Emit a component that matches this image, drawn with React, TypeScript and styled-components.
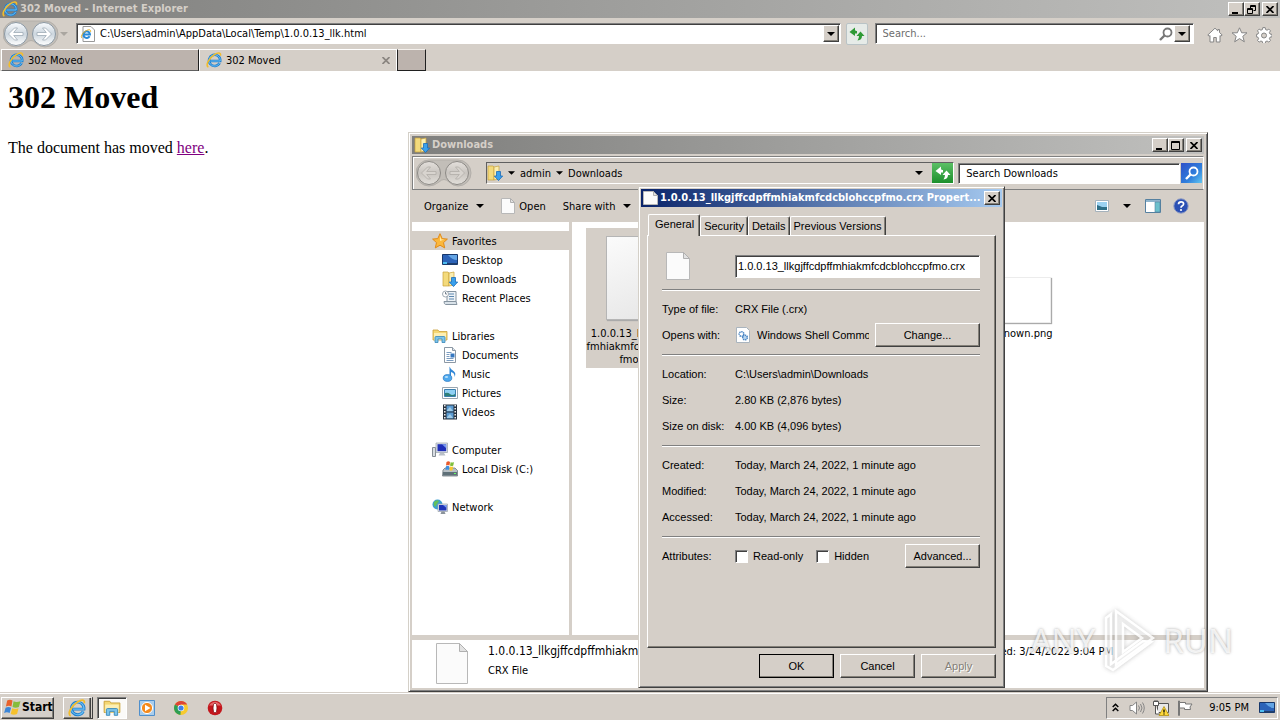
import React from 'react';
import styled, { createGlobalStyle, css } from 'styled-components';

const face = '#d5cfc8';
const ui = '"DejaVu Sans Condensed", "DejaVu Sans", "Noto Sans", sans-serif';
const sans = '"Liberation Sans", Arial, sans-serif';

const Global = createGlobalStyle`
  * { box-sizing: border-box; }
  body { margin: 0; background: #fff; font-family: ${ui}; font-size: 11px; line-height: 13px; color: #000; }
  button, input { font: inherit; color: inherit; margin: 0; }
  h1, h2, p, ul { margin: 0; padding: 0; }
  ul { list-style: none; }
  svg { display: block; flex: none; }
`;

const raised = css`
  background: ${face};
  border: 1px solid;
  border-color: #fff #404040 #404040 #fff;
  box-shadow: inset -1px -1px 0 #848078;
`;

const sunken = css`
  border: 1px solid;
  border-color: #808080 #fff #fff #808080;
  box-shadow: inset 1px 1px 0 #404040;
`;

const Desktop = styled.div`
  position: relative;
  display: flex;
  flex-direction: column;
  min-height: 100vh;
  overflow: hidden;
`;

/* Title bars */
const TitleBar = styled.header<{ $tone?: 'active' | 'idle' }>`
  display: flex;
  align-items: center;
  gap: 2px;
  height: 18px;
  padding: 0 2px;
  color: ${(p) => (p.$tone === 'active' ? '#fff' : face)};
  background: ${(p) =>
    p.$tone === 'active'
      ? 'linear-gradient(90deg, #0a246a, #a6caf0)'
      : 'linear-gradient(90deg, #7f7f7d, #c0c0be)'};
`;
const Title = styled.h2`
  flex: 1;
  min-width: 0;
  font-size: 11px;
  line-height: 18px;
  font-weight: bold;
  white-space: nowrap;
`;
const Captions = styled.div`
  display: flex;
  & > :last-child { margin-left: 2px; }
`;
const CaptionButton = styled.button`
  ${raised}
  display: flex;
  align-items: center;
  justify-content: center;
  width: 16px;
  height: 14px;
  padding: 0;
`;

/* Browser */
const Browser = styled.main`
  flex: 1;
  display: flex;
  flex-direction: column;
`;
const BrowserBar = styled.div`
  display: flex;
  align-items: center;
  height: 31px;
  padding: 0 8px 0 3px;
  background: ${face};
`;
const AddressBox = styled.div`
  ${sunken}
  flex: 760 1 0;
  display: flex;
  align-items: center;
  height: 21px;
  margin: 0 5px 0 7px;
  padding: 1px 1px 1px 3px;
  background: #fff;
`;
const SearchBox = styled(AddressBox)`
  flex-grow: 312;
  margin: 0 13px 0 7px;
  padding-right: 3px;
  & svg { margin-right: 1px; }
`;
const PlainInput = styled.input`
  flex: 1;
  min-width: 0;
  padding: 0 4px;
  border: 0;
  outline: 0;
  background: transparent;
  &::placeholder { color: #6d6d6d; opacity: 1; }
`;
const DropButton = styled.button`
  ${raised}
  display: flex;
  align-items: center;
  justify-content: center;
  width: 16px;
  height: 17px;
  padding: 0;
`;
const IconButton = styled.button`
  display: flex;
  align-items: center;
  justify-content: center;
  padding: 0;
  border: 0;
  background: none;
`;
const RefreshButton = styled(IconButton)`
  width: 22px;
  height: 22px;
  border: 1px solid #b9c3c6;
  border-radius: 2px;
  background: #e6ebe8;
`;
const BrowserTools = styled.div`
  display: flex;
  gap: 8px;
  padding-top: 3px;
`;
const TabStrip = styled.div`
  display: flex;
  height: 22px;
  padding-left: 1px;
  background: ${face};
`;
const BrowserTab = styled.button<{ $current?: boolean }>`
  display: flex;
  align-items: center;
  gap: 4px;
  width: 198px;
  padding: 0 6px;
  text-align: left;
  border: 1px solid;
  border-color: #fff #202020 ${(p) => (p.$current ? face : '#606060')} #fff;
  background: ${(p) => (p.$current ? face : '#bcb3ad')};
  ${(p) => p.$current && 'border-right-color: #fff;'}
  & > span { flex: 1; }
`;
const NewTab = styled.button`
  width: 29px;
  border: 1px solid #202020;
  border-top-color: #f4f0ec;
  background: #bcb3ad;
`;
const Page = styled.article`
  flex: 1;
  padding: 8px;
  font-family: "Liberation Serif", "Times New Roman", serif;
  font-size: 16px;
  line-height: 18px;
  background: #fff;
  & h1 { font-size: 32px; line-height: 37px; margin-bottom: 23px; }
  & a { color: #800080; }
`;

/* Explorer window */
const Window = styled.section`
  position: absolute;
  display: flex;
  flex-direction: column;
  background: ${face};
  border: 1px solid;
  border-color: #d4d0c8 #404040 #404040 #d4d0c8;
  box-shadow: inset 1px 1px 0 #fff, inset -1px -1px 0 #808080;
`;
const ExplorerWindow = styled(Window)`
  left: 408px;
  top: 132px;
  width: 800px;
  height: 560px;
  padding: 3px;
`;
const NavBar = styled.div`
  display: flex;
  align-items: center;
  height: 34px;
  margin-top: 2px;
  padding: 0 1px 0 3px;
  border: 1px solid #808080;
  border-right-color: #fff;
  box-shadow: inset 1px 1px 0 #fff;
`;
const Crumbs = styled.nav`
  flex: 467 1 0;
  display: flex;
  align-items: center;
  gap: 5px;
  height: 22px;
  margin: 0 4px 0 14px;
  border: 1px solid;
  border-color: #606060 #fff #fff #606060;
`;
const Spacer = styled.span`
  flex: 1;
`;
const GreenButton = styled(IconButton)`
  width: 21px;
  height: 20px;
  margin-left: 4px;
  background: linear-gradient(#5cc065, #1c8f2c);
`;
const FolderSearch = styled.div`
  ${sunken}
  flex: 217 1 0;
  display: flex;
  align-items: center;
  height: 21px;
  padding-left: 3px;
  background: #fff;
`;
const BlueButton = styled(IconButton)`
  width: 21px;
  height: 20px;
  margin-left: 1px;
  background: linear-gradient(135deg, #2f50c8, #2f7fdc 60%, #62c6f0);
`;
const CommandBar = styled.div`
  display: flex;
  align-items: center;
  height: 32px;
  padding: 0 15px 0 12px;
`;
const Command = styled.button<{ $gap?: number; $tight?: boolean }>`
  display: flex;
  align-items: center;
  gap: ${(p) => (p.$tight ? 4 : 8)}px;
  margin-right: ${(p) => p.$gap ?? 17}px;
  padding: 0;
  border: 0;
  background: none;
`;
const Panes = styled.div`
  flex: 1;
  display: flex;
  min-height: 0;
  background: #fff;
`;
const Sidebar = styled.nav`
  display: flex;
  flex-direction: column;
  gap: 19px;
  width: 160px;
  padding-top: 9px;
  border-right: 3px solid ${face};
`;
const Place = styled.a<{ $root?: boolean; $current?: boolean }>`
  display: flex;
  align-items: center;
  gap: 4px;
  height: 19px;
  padding-top: 1px;
  padding-left: ${(p) => (p.$root ? 20 : 30)}px;
  color: #000;
  text-decoration: none;
  background: ${(p) => (p.$current ? face : 'transparent')};
`;
const Files = styled.div`
  flex: 1;
  display: flex;
  justify-content: space-between;
  align-items: flex-start;
  padding: 6px 153px 0 14px;
`;
const FileItem = styled.div<{ $selected?: boolean }>`
  display: flex;
  flex-direction: column;
  align-items: center;
  gap: 1px;
  width: ${(p) => (p.$selected ? 104 : 64)}px;
  height: 140px;
  padding-top: 8px;
  text-align: center;
  background: ${(p) => (p.$selected ? face : 'transparent')};
`;
const Thumb = styled.div`
  display: flex;
  align-items: flex-end;
  height: 90px;
`;
const Sheet = styled.div<{ $tall?: boolean }>`
  width: 64px;
  height: ${(p) => (p.$tall ? 84 : 46)}px;
  margin-bottom: ${(p) => (p.$tall ? 6 : 3)}px;
  border: 1px solid ${(p) => (p.$tall ? '#b5b5b5' : '#ececec')};
  background: ${(p) => (p.$tall ? 'linear-gradient(160deg, #fbfbfb, #e6e6e6)' : '#fff')};
  box-shadow: 1px 1px 1px #aaa;
`;
const Details = styled.footer`
  display: flex;
  justify-content: space-between;
  height: 53px;
  padding: 3px 91px 0 24px;
  border-top: 5px solid ${face};
  background: #fff;
`;
const DetailMain = styled.div`
  display: flex;
  gap: 20px;
`;
const DetailText = styled.div`
  padding-top: 2px;
  & p { margin-bottom: 6px; }
`;
const DetailName = styled.p`
  font-size: 12px;
`;

/* Properties dialog */
const Dialog = styled(Window)`
  left: 638px;
  top: 186px;
  width: 367px;
  height: 502px;
  padding: 2px;
  font-family: ${sans};
`;
const DialogTitle = styled(TitleBar)`
  font-family: ${ui};
`;
const DialogTabs = styled.div`
  display: flex;
  align-items: flex-end;
  height: 28px;
  padding: 0 7px;
`;
const DialogTab = styled.button<{ $current?: boolean }>`
  position: relative;
  z-index: ${(p) => (p.$current ? 1 : 0)};
  height: ${(p) => (p.$current ? 22 : 19)}px;
  margin-bottom: ${(p) => (p.$current ? -1 : 0)}px;
  padding: ${(p) => (p.$current ? '0 5px 2px 6px' : '1px 3px 0 3px')};
  border: 1px solid;
  border-color: #fff #404040 transparent #fff;
  border-bottom: 0;
  border-radius: 2px 2px 0 0;
  background: ${face};
  box-shadow: inset -1px 0 0 #848078;
`;
const TabPanel = styled.div`
  ${raised}
  flex: 1;
  margin: 0 6px;
  padding: 15px 15px 0 14px;
`;
const NameRow = styled.div`
  display: grid;
  grid-template-columns: 73px 1fr;
  align-items: center;
  height: 38px;
  padding-bottom: 8px;
  & svg { margin-left: 4px; }
  & input {
    ${sunken}
    height: 23px;
    padding: 0 2px;
    outline: 0;
    background: #fff;
  }
`;
const Section = styled.div`
  padding: 6px 0;
  border-top: 1px solid #808080;
  box-shadow: inset 0 1px 0 #fff;
`;
const Field = styled.div`
  display: grid;
  grid-template-columns: 73px 1fr;
  align-items: center;
  height: 26px;
`;
const Value = styled.div`
  display: flex;
  align-items: center;
  min-width: 0;
  white-space: nowrap;
`;
const Clip = styled.span`
  flex: 1;
  margin: 0 6px;
  overflow: hidden;
`;
const Button = styled.button<{ $width?: number; $primary?: boolean }>`
  ${raised}
  flex: none;
  width: ${(p) => p.$width ?? 75}px;
  height: 24px;
  padding: 0;
  outline: ${(p) => (p.$primary ? '1px solid #000' : '0')};
  outline-offset: -1px;
  &:disabled { color: #848078; text-shadow: 1px 1px 0 #fff; }
`;
const Check = styled.label`
  display: flex;
  align-items: center;
  gap: 5px;
  margin-right: 13px;
  & input {
    ${sunken}
    appearance: none;
    width: 13px;
    height: 13px;
    background: #fff;
  }
`;
const DialogActions = styled.div`
  display: flex;
  justify-content: flex-end;
  gap: 6px;
  padding: 6px 6px 7px;
`;

/* Taskbar */
const Taskbar = styled.footer`
  display: flex;
  align-items: center;
  height: 27px;
  padding: 1px 2px 0 1px;
  border-top: 1px solid #fff;
  background: ${face};
  box-shadow: 0 -1px 0 #d5cfc8;
`;
const StartButton = styled.button`
  ${raised}
  display: flex;
  align-items: center;
  gap: 1px;
  width: 53px;
  height: 22px;
  margin-right: 9px;
  padding: 0 0 0 2px;
  font-size: 12px;
  font-weight: bold;
`;
const TaskButton = styled.button<{ $state?: 'open' | 'pressed' }>`
  display: flex;
  align-items: center;
  justify-content: center;
  width: ${(p) => (p.$state ? 30 : 34)}px;
  height: 22px;
  padding: 0;
  border: 0;
  background: none;
  ${(p) => p.$state === 'open' && raised}
  ${(p) => p.$state === 'open' && 'border-right: 3px double #404040; margin-right: 4px;'}
  ${(p) => p.$state === 'pressed' && sunken}
  ${(p) => p.$state === 'pressed' && 'background: #fbfaf8; margin-right: 3px;'}
`;
const Tray = styled.div`
  display: flex;
  align-items: center;
  gap: 8px;
  height: 22px;
  padding: 0 2px 0 5px;
  border: 1px solid;
  border-color: #808080 #fff #fff #808080;
  & > :first-child { margin-right: 2px; }
  & time { margin: 0 2px 0 8px; }
`;

/* Translucent brand mark floating over the desktop */
const Watermark = styled.div`
  position: absolute;
  right: 47px;
  bottom: 46px;
  display: flex;
  align-items: center;
  gap: 4px;
  font-family: "Noto Sans", "Open Sans", sans-serif;
  font-size: 33px;
  line-height: 66px;
  color: rgba(255, 255, 255, 0.8);
  text-shadow: 0 0 3px rgba(110, 110, 110, 0.6);
  pointer-events: none;
`;
const WatermarkShape = styled.svg`
  filter: drop-shadow(0 0 2px rgba(120, 120, 120, 0.5));
`;

/* Icons */
const IEIcon = ({ size = 16 }: { size?: number }) => (
  <svg width={size} height={size} viewBox="0 0 16 16" fill="none">
    <path d="M13.6 11A5.6 5.6 0 1 1 14.2 9H4.4" stroke="#1f7fd0" strokeWidth="2.6" />
    <path d="M13.6 11A5.6 5.6 0 1 1 14.2 9H4.4" stroke="#6cc0f2" strokeWidth="1" />
    <path d="M2.4 15C-.8 13.8 2.4 6.4 8.4 2.6c3.800-2.400 6.800-2.200 6 1.200" stroke="#f2bd2c" strokeWidth="1.600" />
  </svg>
);
const PageIEIcon = () => (
  <svg width="16" height="16" viewBox="0 0 16 16">
    <path d="M3 .5h8l3.5 3.5v11.5H3z" fill="#fff" stroke="#999" />
    <path d="M9.6 10.2A3.3 3.3 0 1 1 10 8.5H4" fill="none" stroke="#2a8ad8" strokeWidth="2" />
    <path d="M2 12C0 11 3 6 6.5 4.5S11 4 10.5 6" fill="none" stroke="#e8b020" />
  </svg>
);
const Arrows = ({ faded }: { faded?: boolean }) => (
  <svg width="56" height="28" viewBox="0 0 56 28">
    <defs>
      <linearGradient id={faded ? 'gf' : 'gb'} x1="0" y1="0" x2="0" y2="1">
        <stop offset="0" stopColor={faded ? '#e4e0dc' : '#fafcff'} />
        <stop offset=".5" stopColor={faded ? '#c9c5c0' : '#ccd6de'} />
        <stop offset="1" stopColor={faded ? '#e2dfda' : '#fff'} />
      </linearGradient>
    </defs>
    <path d="M13 1h29a13 13 0 0 1 0 26q-5 0-9-4-5-5-10 0-5 4-10 4a13 13 0 0 1 0-26z" fill="#c2beb8" stroke="#b3afaa" />
    {[13, 41].map((x) => (
      <circle key={x} cx={x} cy="14" r="11.5" fill={`url(#${faded ? 'gf' : 'gb'})`} stroke={faded ? '#8c8985' : '#8b98a3'} />
    ))}
    <g fill={faded ? '#d8d4cf' : '#fff'} stroke={faded ? '#b1ada8' : '#9eabb6'} strokeWidth=".8">
      <path d="M5.5 14l6-6h3l-3.8 4.5H20v3h-9.3l3.8 4.5h-3z" />
      <path d="M48.5 14l-6-6h-3l3.8 4.5H34v3h9.3L39.5 20h3z" />
    </g>
  </svg>
);
const Caret = ({ color = '#000', size = 7 }: { color?: string; size?: number }) => (
  <svg width={size} height="4" viewBox="0 0 8 4"><path d="M0 0h8L4 4z" fill={color} /></svg>
);
const Minimise = () => <svg width="10" height="9" viewBox="0 0 10 9"><path d="M1 7h6v2H1z" /></svg>;
const Maximise = () => <svg width="10" height="9" viewBox="0 0 10 9"><path d="M.5.5h8v8h-8zM.5 1.500h8" fill="none" stroke="#000" /></svg>;
const Restore = () => (
  <svg width="10" height="9" viewBox="0 0 10 9" fill="none" stroke="#000">
    <path d="M3.5 3V.5h5v5H6.500M3.500 1.500h5M.5 3.500h5v5h-5zM.5 4.500h5" />
  </svg>
);
const Close = ({ color = '#000' }: { color?: string }) => (
  <svg width="8" height="7" viewBox="0 0 8 7"><path d="M.5 0l7 7M7.5 0l-7 7" stroke={color} strokeWidth="1.7" /></svg>
);
const RefreshIcon = ({ color = '#2e9a35' }: { color?: string }) => (
  <svg width="16" height="14" viewBox="0 0 16 14" fill={color}>
    <path d="M6 .5L.5 5 6 9V6.500H8V4Q6.500 4.300 6 3z" />
    <path d="M11.500 4.500L7.500 9H10Q10 11.500 8.500 13.500 13 13 13 9h2.500z" />
  </svg>
);
const Magnifier = ({ color = '#777' }: { color?: string }) => (
  <svg width="14" height="14" viewBox="0 0 14 14" fill="none" stroke={color}>
    <circle cx="8.5" cy="5.5" r="4" strokeWidth="1.8" />
    <path d="M5.5 8.5L1 13" strokeWidth="2.4" />
  </svg>
);
const HomeIcon = () => (
  <svg width="16" height="16" viewBox="0 0 16 16" fill="#fff" stroke="#858585">
    <path d="M8 1.200L.8 8l1.400 1.200.8-.7v6.500h3.700v-4.500h2.600V15H13V8.500l.8.7L15.200 8l-2.700-2.500V2.500h-1.700v1.400z" />
  </svg>
);
const StarOutline = () => (
  <svg width="17" height="16" viewBox="0 0 17 16" fill="#fff" stroke="#858585">
    <path d="M8.500.8l2.200 5h5.300l-4.200 3.500 1.500 5.500-4.800-3.200-4.800 3.200 1.500-5.500L1 5.800h5.300z" />
  </svg>
);
const GearIcon = () => (
  <svg width="16" height="16" viewBox="0 0 16 16" fill="#fff" stroke="#858585">
    <path d="M6.800.6h2.400l.4 2 1.500.6 1.700-1.100 1.700 1.700-1.100 1.700.6 1.500 2 .4v2.400l-2 .4-.6 1.500 1.100 1.700-1.700 1.700-1.700-1.100-1.500.6-.4 2H6.800l-.4-2-1.500-.6-1.700 1.100-1.700-1.700 1.100-1.700L2 10.200l-1.600-.4V7.400L2 7l.6-1.500-1.100-1.700 1.700-1.700 1.700 1.100 1.500-.6z" />
    <circle cx="8" cy="8.500" r="2.500" fill={face} />
  </svg>
);
const DownloadFolder = () => (
  <svg width="16" height="16" viewBox="0 0 16 16">
    <path d="M1 1h5l1 1v13H1z" fill="#f3da7c" stroke="#c9a23a" strokeWidth=".7" />
    <path d="M7 2l5-1v13l-5 1z" fill="#fbeeb0" stroke="#c9a23a" strokeWidth=".7" />
    <path d="M9.500 6.500h4V11h2.200l-4.200 4.600L7.300 11h2.200z" fill="#3aa0ec" stroke="#1c6cb8" strokeWidth=".8" />
  </svg>
);
const FavStar = () => (
  <svg width="16" height="16" viewBox="0 0 16 16">
    <path d="M8 .7l2.200 4.900 5.200.5-3.900 3.500 1.200 5.300L8 12.200l-4.700 2.700 1.200-5.300L.6 6.100l5.200-.5z" fill="#fbb83c" stroke="#e08a1a" />
    <path d="M8 3l1.300 3.500h3L8 8z" fill="#ffe9a8" />
  </svg>
);
const DesktopIcon = () => (
  <svg width="16" height="16" viewBox="0 0 16 16">
    <path d="M.5 2.500h15v10H.5z" fill="#2c63b8" stroke="#17376b" />
    <path d="M6 3h9v5Q10 8 6 3z" fill="#63a4e4" />
    <path d="M1 11h14v1.500H1z" fill="#20406e" /><path d="M1 10h4v2H1z" fill="#4cbcf0" />
  </svg>
);
const RecentIcon = () => (
  <svg width="16" height="16" viewBox="0 0 16 16">
    <path d="M5 1.500h9v11H5z" fill="#eef3f7" stroke="#8694a0" />
    <path d="M7 4h5M7 6.500h5M7 9h5" stroke="#5c87b0" /><path d="M2 11.500h12l1 3H3.500Q2 14 2 11.500z" fill="#d9e2e9" stroke="#8694a0" />
    <circle cx="3.500" cy="4" r="3" fill="#fff" stroke="#8694a0" strokeWidth=".8" /><path d="M3.500 2v2h1.500" stroke="#456" fill="none" strokeWidth=".7" />
  </svg>
);
const LibraryIcon = ({ size = 16 }: { size?: number }) => (
  <svg width={size} height={size} viewBox="0 0 16 16">
    <path d="M1 2h5l1 1.500h8V12H1z" fill="#f4d774" stroke="#c99f37" strokeWidth=".8" />
    <path d="M2 5h12v7H2z" fill="#fcefb4" />
    <path d="M3 14.500V9.500q0-1 1-1h8q1 0 1 1v5h-3V11H6v3.500z" fill="#7cc4ea" stroke="#3787b8" strokeWidth=".8" />
  </svg>
);
const DocIcon = () => (
  <svg width="16" height="16" viewBox="0 0 16 16">
    <path d="M2.500.5h8l3 3v12h-11z" fill="#fff" stroke="#8c98a4" />
    <path d="M10.500.5v3h3" fill="#dbe4ec" stroke="#8c98a4" />
    <path d="M4.500 5.500h5M4.500 7.500h3M4.500 9.500h3M4.500 11.500h7M4.500 13.500h7" stroke="#7b9cc0" /><path d="M8.500 6.500h4v4h-4z" fill="#3577c0" />
  </svg>
);
const MusicIcon = () => (
  <svg width="16" height="16" viewBox="0 0 16 16">
    <path d="M7.500 12V.5q1 3 4 4.500 3 2 1 6 .5-4-3.500-5v6z" fill="#2f86d6" />
    <ellipse cx="5.500" cy="12" rx="4.300" ry="3.400" fill="#4fa9ee" stroke="#2272bd" strokeWidth=".7" />
    <ellipse cx="4.500" cy="11" rx="1.700" ry="1" fill="#b7e0fb" />
  </svg>
);
const PictureIcon = () => (
  <svg width="16" height="16" viewBox="0 0 16 16">
    <path d="M.5 2.500h15v11H.5z" fill="#fff" stroke="#9aa6b0" />
    <path d="M2.500 4.500h11v7h-11z" fill="#8fd0f4" stroke="#3b7fae" />
    <path d="M3 8q3-1 5 1t5 0v2H3z" fill="#2d7f78" />
  </svg>
);
const VideoIcon = () => (
  <svg width="16" height="16" viewBox="0 0 16 16">
    <path d="M1 .5h14v15H1z" fill="#26303c" />
    <path d="M4.500 1.500h7v6h-7zM4.500 8.500h7v6h-7z" fill="#5b9bd2" />
    <path d="M5 6l3-3 3 4H5zM5 13l3-3 3 4H5z" fill="#9fcbe8" />
    <path d="M2.800 1v15M13.200 1v15" stroke="#fff" strokeWidth="1.400" strokeDasharray="1.500 1.500" />
  </svg>
);
const ComputerIcon = () => (
  <svg width="16" height="16" viewBox="0 0 16 16">
    <path d="M.5 5.500h3v9h-3z" fill="#d8dde2" stroke="#858c94" />
    <path d="M4 1h11.500v9.500H4z" fill="#dfe4ea" stroke="#98a0aa" strokeWidth=".7" /><path d="M5.500 2.200h8.700v7H5.500z" fill="#1f2fb8" />
    <path d="M10 2.200h4.200v4z" fill="#7b9cf0" /><path d="M8 11h4l1.500 2.500h-7z" fill="#b9c0c8" />
  </svg>
);
const DiskIcon = () => (
  <svg width="16" height="16" viewBox="0 0 16 16">
    <path d="M1 9l2-2h10l2.500 2.500V15H.5z" fill="#b8c0c6" stroke="#6f787f" strokeWidth=".8" /><path d="M1 11h14v3.500H1z" fill="#5f7078" />
    <path d="M12 12h2v1h-2z" fill="#6f6" />
    <path d="M4.500 1q2-1.500 3.500 0L7.500 4.500q-1.500-1-3.500 0z" fill="#e85a2a" /><path d="M8.700 1q1.500 1 3.300 0l-.7 3.500q-1.500 1-3.300 0z" fill="#7fbf3a" />
    <path d="M4 5.300q2-1 3.300 0L6.800 9q-1.500-1-3.300 0z" fill="#3d8fe0" /><path d="M8 5.300q1.500 1 3.200 0l-.7 4q-1.500.7-3 0z" fill="#f8c62e" />
  </svg>
);
const NetworkIcon = () => (
  <svg width="16" height="16" viewBox="0 0 16 16">
    <circle cx="5.500" cy="5.500" r="5" fill="#3d9fd0" /><path d="M2 3q3-3 5-1L5 5 3 8Q1 6 2 3z" fill="#63c05a" />
    <path d="M6 5h9.500v7.500H6z" fill="#dfe4ea" stroke="#98a0aa" strokeWidth=".7" /><path d="M7 6h7.500v5.500H7z" fill="#1f35b8" />
    <path d="M11 6h3.500v3z" fill="#7b9cf0" /><path d="M9.500 12.500h3l1 2.500h-5z" fill="#8b939b" />
  </svg>
);
const FileIcon = ({ w = 12, h = 14 }: { w?: number; h?: number }) => {
  const fold = Math.round(w / 4);
  return (
    <svg width={w} height={h} viewBox={`0 0 ${w} ${h}`}>
      <path d={`M.5.5h${w - 1 - fold}l${fold} ${fold}v${h - 1 - fold}h-${w - 1}z`} fill="#fbfbfb" stroke="#b8b8b8" />
      <path d={`M${w - 0.5 - fold}.5v${fold}h${fold}z`} fill="#e2e2e2" stroke="#b0b0b0" />
    </svg>
  );
};
const DllIcon = () => (
  <svg width="16" height="16" viewBox="0 0 16 16">
    <path d="M1.500.5h10l3 3v12h-13z" fill="#fff" stroke="#a9b4be" />
    <circle cx="6.500" cy="7" r="2.300" fill="none" stroke="#4b86c4" strokeWidth="1.500" strokeDasharray="1.300 .6" />
    <circle cx="10" cy="10.500" r="2.300" fill="#bcd8f0" stroke="#4b86c4" strokeWidth="1.500" strokeDasharray="1.300 .6" />
  </svg>
);
const ViewIcon = () => (
  <svg width="14" height="12" viewBox="0 0 14 12">
    <path d="M.5.5h13v11H.5z" fill="#fff" stroke="#a5b2bc" /><path d="M2 2h10v8H2z" fill="#9bd2f2" /><path d="M2 5q3 1 5 2h5v3H2z" fill="#2d6f88" />
  </svg>
);
const PreviewIcon = () => (
  <svg width="16" height="14" viewBox="0 0 16 14">
    <path d="M.5.5h15v13H.5z" fill="#fff" stroke="#5580a0" /><path d="M1 1h14v2H1z" fill="#8fb4cc" /><path d="M10 3h5v10h-5z" fill="#6cc0cc" stroke="#5580a0" strokeWidth=".6" />
  </svg>
);
const HelpIcon = () => (
  <svg width="16" height="16" viewBox="0 0 16 16">
    <circle cx="8" cy="8" r="7.200" fill="#2b50b4" stroke="#8f9cc4" />
    <path d="M5.500 6.200Q5.600 3.800 8.100 3.800T10.600 6Q10.500 7.200 9 8 8 8.500 8 9.800" fill="none" stroke="#fff" strokeWidth="1.700" /><circle cx="8" cy="12" r="1.100" fill="#fff" />
  </svg>
);
const WindowsFlag = () => (
  <svg width="17" height="17" viewBox="0 0 16 16">
    <path d="M3 1.500q2.500-1.700 5 0L7 7q-2.400-1.500-5.200 0z" fill="#e8622c" /><path d="M9 2q2.500 1.500 6.500 0l-1.500 5.500q-3 1.500-6 0z" fill="#86bc3c" />
    <path d="M1.500 8.200q2.700-1.500 5.200 0l-1.400 5q-2.500-1.500-5.200 0z" fill="#3b86d8" /><path d="M7.700 8.600q3 1.500 6 0l-1.400 5.400q-3 1.500-6 0z" fill="#f6c12c" />
  </svg>
);
const MediaIcon = () => (
  <svg width="16" height="16" viewBox="0 0 16 16">
    <path d="M.5.5h15v15H.5z" fill="#a9cdec" stroke="#4f8fcc" /><circle cx="8" cy="8" r="5.600" fill="#f58a1c" stroke="#fff" /><path d="M6 4.800v6.400L11.500 8z" fill="#fff" />
  </svg>
);
const ChromeIcon = () => (
  <svg width="16" height="16" viewBox="0 0 16 16">
    <circle cx="8" cy="8" r="7" fill="#f7ca2e" /><path d="M8 8L1.900 4.600A7 7 0 0 1 14.200 4.600H8z" fill="#de4437" />
    <path d="M8 8L1.900 4.600A7 7 0 0 0 7.400 15z" fill="#2e9e54" /><circle cx="8" cy="8" r="3.300" fill="#fff" /><circle cx="8" cy="8" r="2.600" fill="#3f7fe8" />
  </svg>
);
const OperaIcon = () => (
  <svg width="16" height="16" viewBox="0 0 16 16">
    <circle cx="8" cy="8" r="7.300" fill="#c3161c" /><path d="M2 5.500Q8-2 14 5.500z" fill="#e8676a" /><ellipse cx="8" cy="8" rx="2" ry="5" fill="#fff" stroke="#7a0b10" strokeWidth=".8" />
  </svg>
);
const Chevrons = () => (
  <svg width="7" height="9" viewBox="0 0 7 9"><path d="M.7 4l2.800-2.700L6.300 4M.7 8l2.800-2.700L6.300 8" fill="none" stroke="#000" strokeWidth="1.500" /></svg>
);
const Speaker = () => (
  <svg width="16" height="16" viewBox="0 0 16 16" fill="none" stroke="#858585">
    <path d="M1 5.500h2.500L7.500 2v12L3.500 10.500H1z" fill="#fff" /><path d="M9.500 5.500q2 2.500 0 5M11.500 4q3 4 0 8M13.500 2.500q3.500 5.500 0 11" />
  </svg>
);
const NetTray = () => (
  <svg width="16" height="16" viewBox="0 0 16 16">
    <path d="M4.500 3.500h11v9h-11z" fill="#e8e8e8" stroke="#555" /><path d="M.5 1.500h5v4h-5zM2.500 6v8h4" fill="#fff" stroke="#555" /><path d="M2 0v2M4 0v2" stroke="#555" />
    <path d="M11 6.500l5 9H6z" fill="#ffd93a" stroke="#a98500" strokeWidth=".7" /><path d="M11 9.500v3M11 13.500v1" stroke="#000" strokeWidth="1.300" />
  </svg>
);
const FlagIcon = () => (
  <svg width="16" height="16" viewBox="0 0 16 16" fill="#fff" stroke="#777">
    <path d="M1.500 1v14.500h1V1z" /><path d="M2.500 2.500h6v1.500h6.500l-2 3 .5 2.500H7.500V8h-5z" />
  </svg>
);

type PlaceDef = { label: string; icon: React.ReactNode };
const groups: PlaceDef[][] = [
  [
    { label: 'Favorites', icon: <FavStar /> },
    { label: 'Desktop', icon: <DesktopIcon /> },
    { label: 'Downloads', icon: <DownloadFolder /> },
    { label: 'Recent Places', icon: <RecentIcon /> },
  ],
  [
    { label: 'Libraries', icon: <LibraryIcon /> },
    { label: 'Documents', icon: <DocIcon /> },
    { label: 'Music', icon: <MusicIcon /> },
    { label: 'Pictures', icon: <PictureIcon /> },
    { label: 'Videos', icon: <VideoIcon /> },
  ],
  [
    { label: 'Computer', icon: <ComputerIcon /> },
    { label: 'Local Disk (C:)', icon: <DiskIcon /> },
  ],
  [{ label: 'Network', icon: <NetworkIcon /> }],
];

const fileInfo = [
  ['Location:', 'C:\\Users\\admin\\Downloads'],
  ['Size:', '2.80 KB (2,876 bytes)'],
  ['Size on disk:', '4.00 KB (4,096 bytes)'],
];
const dates = [
  ['Created:', 'Today, March 24, 2022, 1 minute ago'],
  ['Modified:', 'Today, March 24, 2022, 1 minute ago'],
  ['Accessed:', 'Today, March 24, 2022, 1 minute ago'],
];

const Fields = ({ rows }: { rows: string[][] }) => (
  <Section>
    {rows.map(([label, value]) => (
      <Field key={label}><span>{label}</span><Value>{value}</Value></Field>
    ))}
  </Section>
);

const BrowserWindow = () => (
  <Browser>
    <TitleBar>
      <IEIcon />
      <Title as="div">302 Moved - Internet Explorer</Title>
      <Captions>
        <CaptionButton aria-label="Minimize"><Minimise /></CaptionButton>
        <CaptionButton aria-label="Restore"><Restore /></CaptionButton>
        <CaptionButton aria-label="Close"><Close /></CaptionButton>
      </Captions>
    </TitleBar>
    <BrowserBar>
      <Arrows />
      <Caret color="#aaa6a0" size={10} />
      <AddressBox>
        <PageIEIcon />
        <PlainInput aria-label="Address" defaultValue={'C:\\Users\\admin\\AppData\\Local\\Temp\\1.0.0.13_llk.html'} />
        <DropButton aria-label="Show addresses"><Caret size={8} /></DropButton>
      </AddressBox>
      <RefreshButton aria-label="Refresh"><RefreshIcon /></RefreshButton>
      <SearchBox>
        <PlainInput aria-label="Search" placeholder="Search..." />
        <Magnifier />
        <DropButton aria-label="Search options"><Caret size={8} /></DropButton>
      </SearchBox>
      <BrowserTools>
        <IconButton aria-label="Home"><HomeIcon /></IconButton>
        <IconButton aria-label="Favorites"><StarOutline /></IconButton>
        <IconButton aria-label="Tools"><GearIcon /></IconButton>
      </BrowserTools>
    </BrowserBar>
    <TabStrip>
      <BrowserTab><IEIcon /><span>302 Moved</span></BrowserTab>
      <BrowserTab $current><IEIcon /><span>302 Moved</span><Close color="#8a8580" /></BrowserTab>
      <NewTab aria-label="New tab" />
    </TabStrip>
    <Page>
      <h1>302 Moved</h1>
      <p>The document has moved <a href="#moved">here</a>.</p>
    </Page>
  </Browser>
);

const Explorer = () => (
  <ExplorerWindow aria-label="Downloads">
    <TitleBar>
      <DownloadFolder />
      <Title>Downloads</Title>
      <Captions>
        <CaptionButton aria-label="Minimize"><Minimise /></CaptionButton>
        <CaptionButton aria-label="Maximize"><Maximise /></CaptionButton>
        <CaptionButton aria-label="Close"><Close /></CaptionButton>
      </Captions>
    </TitleBar>
    <NavBar>
      <Arrows faded />
      <Crumbs>
        <DownloadFolder />
        <Caret />
        <IconButton>admin</IconButton>
        <Caret />
        <IconButton>Downloads</IconButton>
        <Spacer />
        <Caret size={8} />
        <GreenButton aria-label="Refresh"><RefreshIcon color="#fff" /></GreenButton>
      </Crumbs>
      <FolderSearch><PlainInput aria-label="Search Downloads" defaultValue="Search Downloads" /></FolderSearch>
      <BlueButton aria-label="Search"><Magnifier color="#fff" /></BlueButton>
    </NavBar>
    <CommandBar>
      <Command>Organize <Caret size={8} /></Command>
      <Command $tight><FileIcon w={14} h={16} />Open</Command>
      <Command>Share with <Caret size={8} /></Command>
      <Spacer />
      <Command $gap={14} aria-label="Change view"><ViewIcon /></Command>
      <Command $gap={14} aria-label="View options"><Caret size={8} /></Command>
      <Command $gap={12} aria-label="Preview pane"><PreviewIcon /></Command>
      <Command $gap={0} aria-label="Help"><HelpIcon /></Command>
    </CommandBar>
    <Panes>
      <Sidebar>
        {groups.map((group) => (
          <ul key={group[0].label}>
            {group.map((place, i) => (
              <li key={place.label}>
                <Place href="#place" $root={i === 0} $current={place.label === 'Favorites'}>
                  {place.icon}{place.label}
                </Place>
              </li>
            ))}
          </ul>
        ))}
      </Sidebar>
      <Files>
        <FileItem $selected>
          <Thumb><Sheet $tall /></Thumb>
          <span>1.0.0.13_llkgjffcdpf<br />fmhiakmfcdcblohccp<br />fmo.crx</span>
        </FileItem>
        <FileItem>
          <Thumb><Sheet /></Thumb>
          <span>unknown.png</span>
        </FileItem>
      </Files>
    </Panes>
    <Details>
      <DetailMain>
        <FileIcon w={32} h={41} />
        <DetailText><DetailName>1.0.0.13_llkgjffcdpffmhiakmfcdcblohccpfmo.crx</DetailName><p>CRX File</p></DetailText>
      </DetailMain>
      <DetailText><p>Date modified: 3/24/2022 9:04 PM</p></DetailText>
    </Details>
  </ExplorerWindow>
);

const Properties = () => (
  <Dialog role="dialog" aria-label="File properties">
    <DialogTitle $tone="active">
      <FileIcon w={15} h={14} />
      <Title>1.0.0.13_llkgjffcdpffmhiakmfcdcblohccpfmo.crx Propert...</Title>
      <Captions><CaptionButton aria-label="Close"><Close /></CaptionButton></Captions>
    </DialogTitle>
    <DialogTabs role="tablist">
      <DialogTab role="tab" $current>General</DialogTab>
      <DialogTab role="tab">Security</DialogTab>
      <DialogTab role="tab">Details</DialogTab>
      <DialogTab role="tab">Previous Versions</DialogTab>
    </DialogTabs>
    <TabPanel>
      <NameRow>
        <FileIcon w={24} h={28} />
        <input aria-label="File name" defaultValue="1.0.0.13_llkgjffcdpffmhiakmfcdcblohccpfmo.crx" />
      </NameRow>
      <Section>
        <Field><span>Type of file:</span><Value>CRX File (.crx)</Value></Field>
        <Field>
          <span>Opens with:</span>
          <Value><DllIcon /><Clip>Windows Shell Common</Clip><Button $width={105}>Change...</Button></Value>
        </Field>
      </Section>
      <Fields rows={fileInfo} />
      <Fields rows={dates} />
      <Section>
        <Field>
          <span>Attributes:</span>
          <Value>
            <Check><input type="checkbox" />Read-only</Check>
            <Check><input type="checkbox" />Hidden</Check>
            <Spacer />
            <Button>Advanced...</Button>
          </Value>
        </Field>
      </Section>
    </TabPanel>
    <DialogActions>
      <Button $primary>OK</Button>
      <Button>Cancel</Button>
      <Button disabled>Apply</Button>
    </DialogActions>
  </Dialog>
);

export default function App() {
  return (
    <Desktop>
      <Global />
      <BrowserWindow />
      <Explorer />
      <Properties />
      <Taskbar>
        <StartButton><WindowsFlag />Start</StartButton>
        <TaskButton $state="open" aria-label="Internet Explorer"><IEIcon size={18} /></TaskButton>
        <TaskButton $state="pressed" aria-label="Windows Explorer"><LibraryIcon size={18} /></TaskButton>
        <TaskButton aria-label="Media Player"><MediaIcon /></TaskButton>
        <TaskButton aria-label="Chrome"><ChromeIcon /></TaskButton>
        <TaskButton aria-label="Opera"><OperaIcon /></TaskButton>
        <Spacer />
        <Tray>
          <Chevrons />
          <Speaker />
          <NetTray />
          <FlagIcon />
          <time>9:05 PM</time>
          <DesktopIcon />
        </Tray>
      </Taskbar>
      <Watermark>
        <span>ANY</span>
        <WatermarkShape width="60" height="66" viewBox="0 0 60 66" fill="rgba(255,255,255,.4)" stroke="#fff" strokeWidth="2.5" opacity=".85">
          <path d="M17 3l37 27-37 27zM24 16v28l19-14z" fillRule="evenodd" />
          <path d="M7 10l5-4v50l32-23 8 1-38 28-7-4z" />
        </WatermarkShape>
        <span>RUN</span>
      </Watermark>
    </Desktop>
  );
}
